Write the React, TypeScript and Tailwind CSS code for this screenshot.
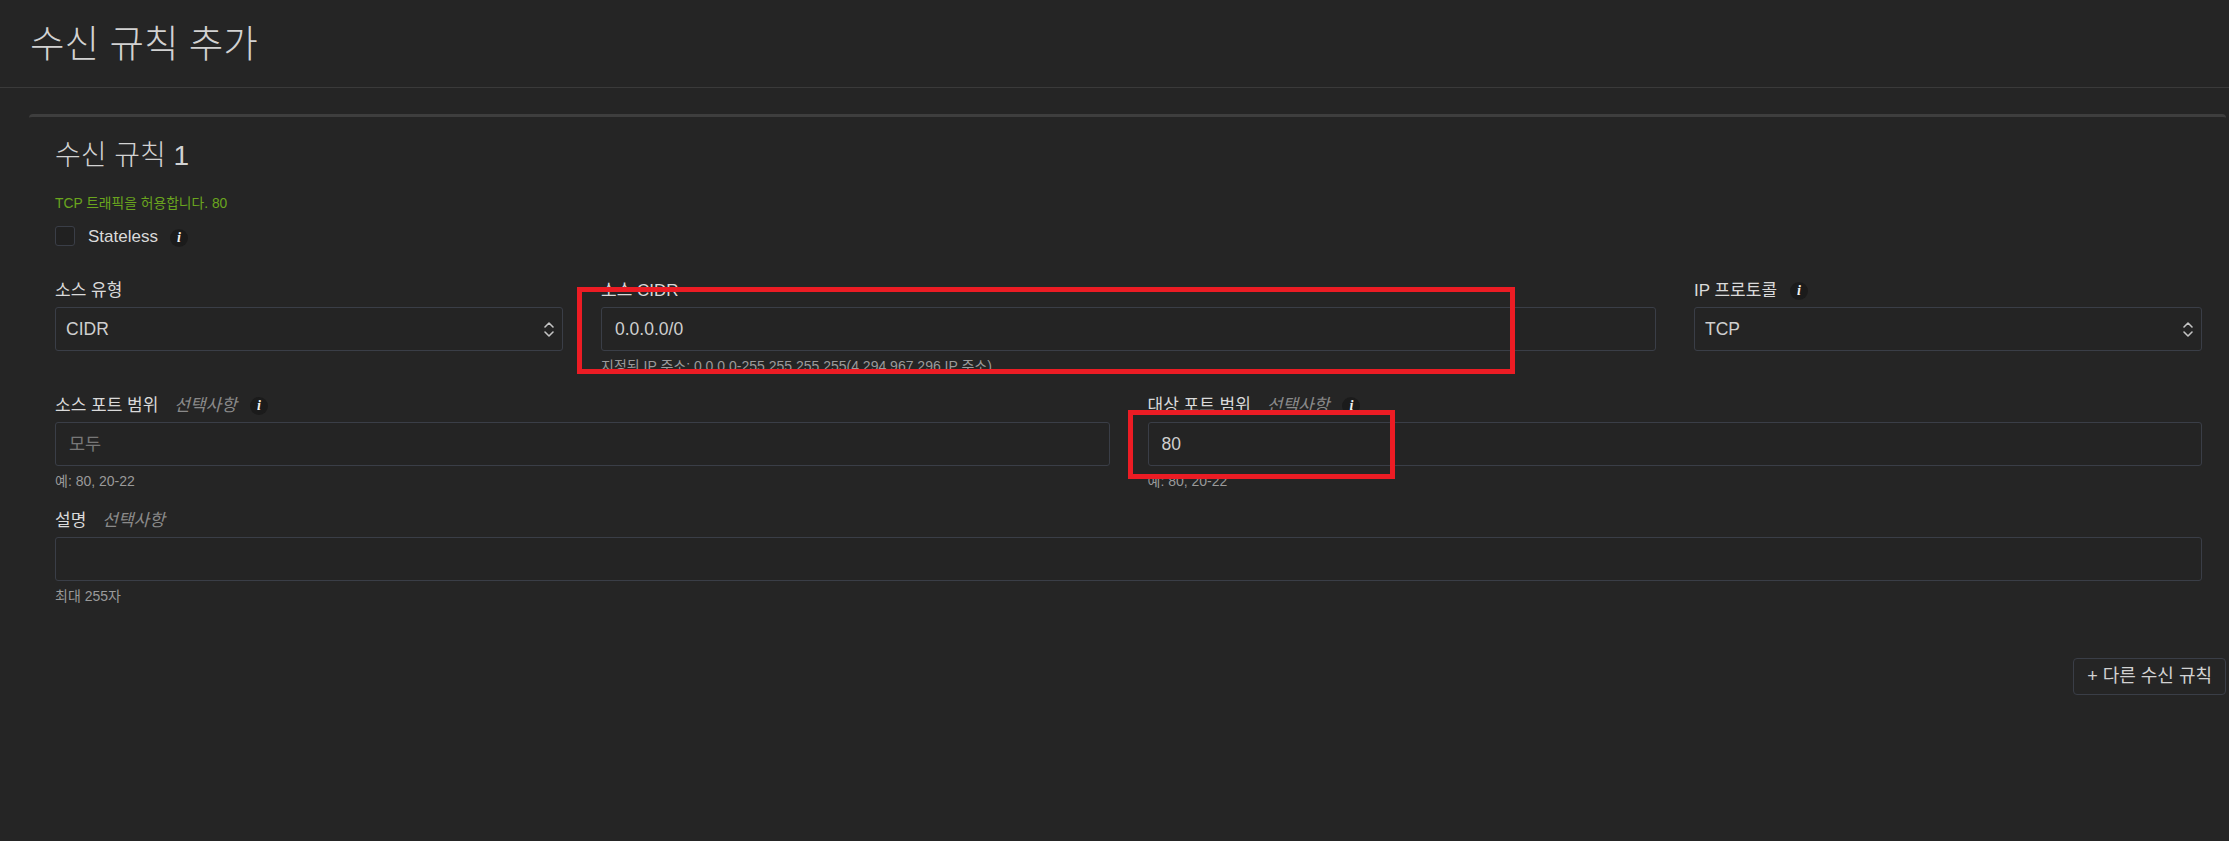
import React from "react";

function Info() {
  return (
    <span className="inline-flex h-[18px] w-[18px] items-center justify-center rounded-full bg-[#1b1b1b] font-['Liberation_Serif',serif] text-[14px] font-bold italic leading-none text-[#f2f2f2]">
      i
    </span>
  );
}

function Label({ text, optional, info }: { text: string; optional?: boolean; info?: boolean }) {
  return (
    <div className="mb-[6px] flex h-[20px] items-center whitespace-nowrap text-[17px] leading-[20px] text-[#dadada]">
      <span>{text}</span>
      {optional && <span className="ml-[16px] italic text-[#8a8a8a]">선택사항</span>}
      {info && (
        <span className="ml-[13px] flex items-center">
          <Info />
        </span>
      )}
    </div>
  );
}

function Helper({ text }: { text: string }) {
  return <div className="mt-[5px] h-[20px] whitespace-nowrap text-[14px] leading-[20px] text-[#9a9a9a]">{text}</div>;
}

function Chevrons() {
  return (
    <svg width="12" height="17" viewBox="0 0 12 17" fill="none" stroke="#c4c4c4" strokeWidth="1.6" strokeLinecap="round" strokeLinejoin="round">
      <path d="M2 6 L6 2 L10 6" />
      <path d="M2 11 L6 15 L10 11" />
    </svg>
  );
}

function SelectBox({ value }: { value: string }) {
  return (
    <div className="flex h-[44px] items-center justify-between rounded-[3px] border border-[#3a3e47] bg-[#242424] pl-[10px] pr-[7px] text-[17.5px] text-[#cfcfcf]">
      <span>{value}</span>
      <Chevrons />
    </div>
  );
}

function TextBox({ value, placeholder }: { value?: string; placeholder?: string }) {
  return (
    <input
      readOnly
      value={value ?? ""}
      placeholder={placeholder}
      className="block h-[44px] w-full rounded-[3px] border border-[#3a3e47] bg-[#242424] pl-[13px] text-[17.5px] text-[#cfcfcf] outline-none placeholder:text-[#777777]"
    />
  );
}

export default function App() {
  return (
    <div className="relative min-h-screen w-full overflow-hidden bg-[#252525] font-['Liberation_Sans','Noto_Sans_CJK_KR',sans-serif] text-[#d0d0d0]">
      <header className="flex h-[88px] items-center border-b border-[#3a3a3a] pl-[30px]">
        <h1 className="text-[37.5px] font-light leading-[38px] text-[#d2d2d2]">수신 규칙 추가</h1>
      </header>

      <section className="ml-[29px] mr-[3px] mt-[26px] rounded-t-[4px] border-t-[3px] border-[#3e3e3e]">
        <div className="pl-[26px] pr-[24px] pt-[22px]">
          <h2 className="text-[28px] font-light leading-[34px] text-[#d2d2d2]">수신 규칙 1</h2>
          <p className="mt-[22px] text-[13.8px] leading-[18px] text-[#6aa51e]">TCP 트래픽을 허용합니다. 80</p>

          <div className="mt-[13px] flex h-[20px] items-center">
            <span className="h-[20px] w-[20px] rounded-[3px] border border-[#3a3e47] bg-[#212121]" />
            <span className="ml-[13px] pt-[2px] text-[17px] leading-[20px] text-[#dadada]">Stateless</span>
            <span className="ml-[12px] flex items-center pt-[3px]">
              <Info />
            </span>
          </div>

          <div className="mt-[35px] flex flex-col gap-[20px]">
            <div className="grid grid-cols-[508px_1fr_508px] gap-x-[38px]">
              <div>
                <Label text="소스 유형" />
                <SelectBox value="CIDR" />
              </div>
              <div>
                <Label text="소스 CIDR" />
                <TextBox value="0.0.0.0/0" />
                <Helper text="지정된 IP 주소: 0.0.0.0-255.255.255.255(4,294,967,296 IP 주소)" />
              </div>
              <div>
                <Label text="IP 프로토콜" info />
                <SelectBox value="TCP" />
              </div>
            </div>

            <div className="grid grid-cols-2 gap-x-[38px]">
              <div>
                <Label text="소스 포트 범위" optional info />
                <TextBox placeholder="모두" />
                <Helper text="예: 80, 20-22" />
              </div>
              <div>
                <Label text="대상 포트 범위" optional info />
                <TextBox value="80" />
                <Helper text="예: 80, 20-22" />
              </div>
            </div>

            <div>
              <Label text="설명" optional />
              <TextBox />
              <Helper text="최대 255자" />
            </div>
          </div>
        </div>

        <div className="mt-[52px] flex justify-end">
          <button className="flex h-[37px] items-center rounded-[4px] border border-[#3a3e47] bg-[#252525] px-[13px] text-[18px] text-[#d2d2d2]">
            + 다른 수신 규칙
          </button>
        </div>
      </section>

      <div className="pointer-events-none absolute left-[577px] top-[287px] h-[87px] w-[938px] border-[5px] border-[#ec1c24]" />
      <div className="pointer-events-none absolute left-[1128px] top-[410px] h-[69px] w-[267px] border-[5px] border-[#ec1c24]" />
    </div>
  );
}
